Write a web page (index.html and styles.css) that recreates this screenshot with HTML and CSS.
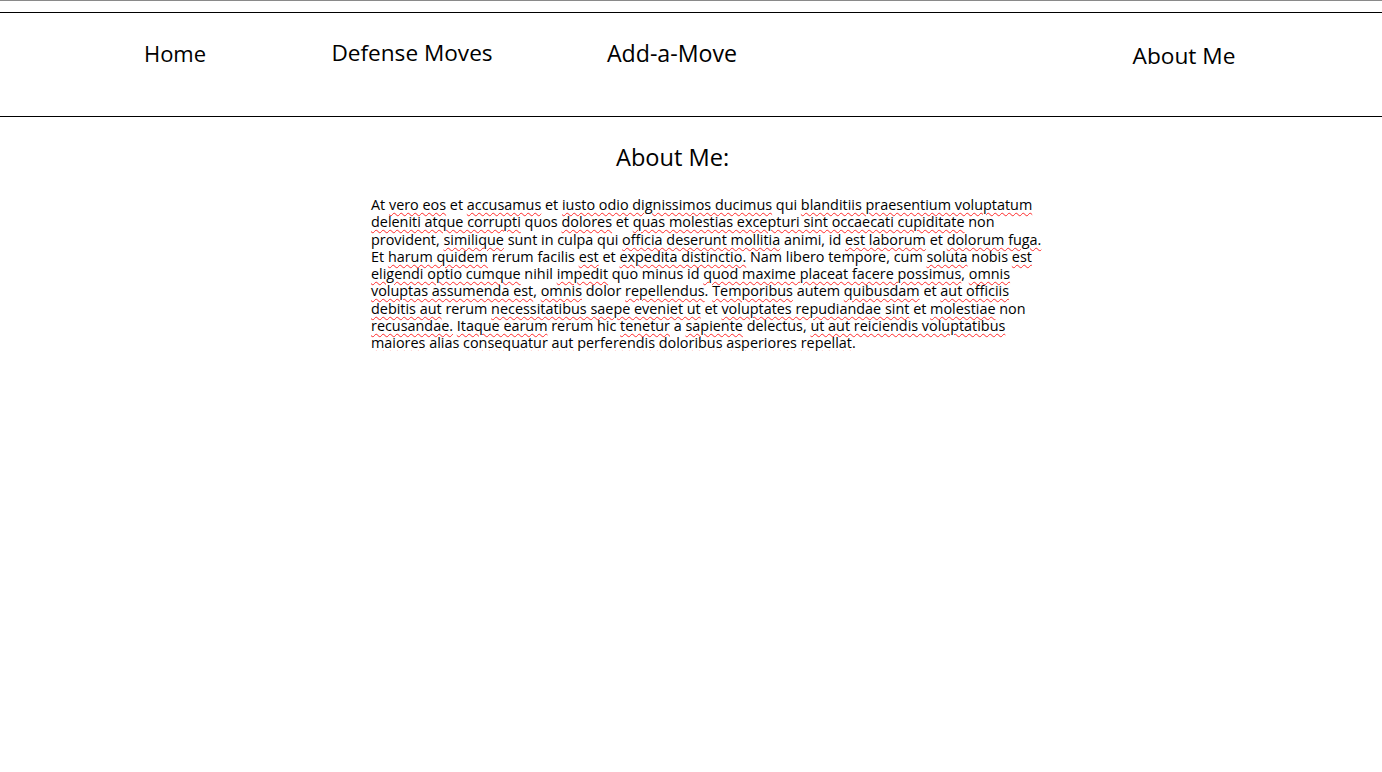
FILE: index.html
```html
<!DOCTYPE html>
<html>
<head>
<meta charset="utf-8">
<link rel="stylesheet" href="styles.css">
</head>
<body>
<div class="topline"></div>
<nav class="nav">
  <a class="nav-item home">Home</a>
  <a class="nav-item defense">Defense Moves</a>
  <a class="nav-item add">Add-a-Move</a>
  <a class="nav-item about">About Me</a>
</nav>
<main class="content">
  <h1 class="title">About Me:</h1>
  <p class="text">At <span class="sp">vero eos</span> et <span class="sp">accusamus</span> et <span class="sp">iusto odio dignissimos ducimus</span> qui <span class="sp">blanditiis praesentium voluptatum</span> <span class="sp">deleniti atque corrupti</span> quos <span class="sp">dolores</span> et <span class="sp">quas molestias excepturi sint occaecati cupiditate</span> non provident, <span class="sp">similique</span> sunt in culpa qui <span class="sp">officia deserunt mollitia</span> animi, id <span class="sp">est laborum</span> et <span class="sp">dolorum fuga.</span> Et <span class="sp">harum quidem</span> rerum facilis <span class="sp">est</span> et <span class="sp">expedita distinctio.</span> Nam libero tempore, cum <span class="sp">soluta</span> nobis <span class="sp">est</span> <span class="sp">eligendi optio cumque</span> nihil <span class="sp">impedit</span> quo minus id <span class="sp">quod maxime placeat facere possimus</span>, <span class="sp">omnis</span> <span class="sp">voluptas assumenda est</span>, <span class="sp">omnis</span> dolor <span class="sp">repellendus</span>. <span class="sp">Temporibus</span> autem <span class="sp">quibusdam</span> et <span class="sp">aut officiis</span> <span class="sp">debitis aut</span> rerum <span class="sp">necessitatibus saepe eveniet ut</span> et <span class="sp">voluptates repudiandae sint</span> et <span class="sp">molestiae</span> non <span class="sp">recusandae.</span> <span class="sp">Itaque earum</span> rerum hic <span class="sp">tenetur</span> a <span class="sp">sapiente</span> delectus, <span class="sp">ut aut reiciendis voluptatibus</span> <span class="sp">maiores</span> alias <span class="sp">consequatur aut perferendis doloribus</span> <span class="sp">asperiores repellat</span>.</p>
</main>
</body>
</html>
```
FILE: styles.css
```css
html, body {
  margin: 0;
  padding: 0;
  background: #fff;
}
body {
  font-family: "Open Sans", "Liberation Sans", sans-serif;
  color: #000;
}
.topline {
  height: 1px;
  background: #8a8a8a;
  margin-bottom: 11px;
}
.nav {
  position: relative;
  height: 103px;
  border-top: 1px solid #000;
  border-bottom: 1px solid #000;
}
.nav-item {
  position: absolute;
  font-size: 22px;
  line-height: 30px;
  color: #000;
  white-space: nowrap;
  transform: translateX(-50%);
}
.home { left: 175px; top: 25px; }
.defense { left: 412px; top: 25px; font-size: 22.6px; }
.add { left: 672px; top: 25px; font-size: 23.2px; }
.about { left: 1184px; top: 28px; font-size: 22.7px; }
.content {
  padding-left: 371px;
  width: 680px;
}
.title {
  margin: 25px 0 0 0;
  padding-left: 245px;
  font-size: 23.6px;
  font-weight: normal;
  line-height: 30px;
}
.text {
  margin: 24px 0 0 0;
  font-size: 14.4px;
  line-height: 17.25px;
}
.sp {
  text-decoration: underline wavy #ff2a2a;
  text-decoration-thickness: 1px;
  text-underline-offset: 2px;
}
```
